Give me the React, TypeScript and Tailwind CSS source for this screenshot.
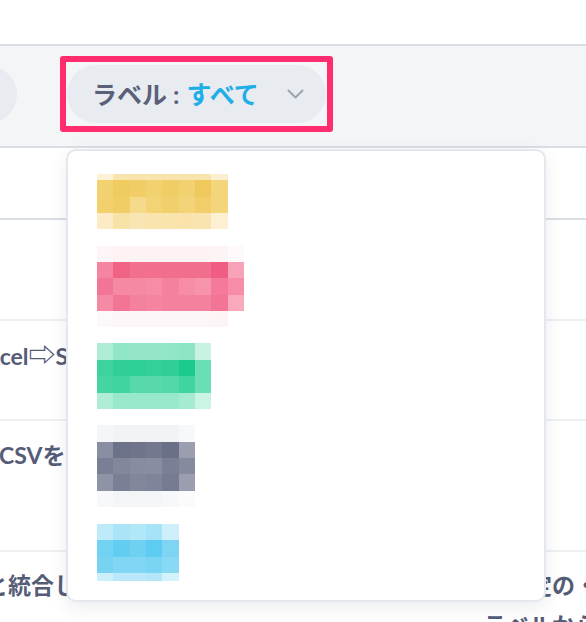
import React from 'react';

// Pixelated label swatches shown inside the dropdown (blurred label names)
interface Swatch {
  rows: number[];
  cells: string[][];
}

const CELL_W = 16.35;

const SWATCHES: Swatch[] = [
  {
    rows: [6, 17, 16, 16],
    cells: [
      ['#fdf1d6', '#f9e4ad', '#f9e4ad', '#f9e4ad', '#f9e4ad', '#f9e4ad', '#f9e4ad', '#fbefcf'],
      ['#f2d171', '#f0cb60', '#f1cd66', '#f2d170', '#f1cd66', '#f2d170', '#efc95b', '#f3d57c'],
      ['#f2d06d', '#f1cd66', '#f5da8b', '#f3d375', '#f1cf6b', '#f3d478', '#f1ce69', '#f3d57c'],
      ['#fcebc4', '#f9e2a7', '#f8e5b4', '#f9e4ae', '#f9e4ae', '#f9e3ab', '#f9e4b0', '#fcefd2'],
    ],
  },
  {
    rows: [16, 16, 17, 16, 16],
    cells: [
      ['#fdf5f7', '#fdf3f5', '#fdf3f5', '#fdf3f5', '#fdf3f5', '#fdf3f5', '#fdf3f5', '#fdf4f6', '#fefafb'],
      ['#f4849f', '#f06385', '#f26f8e', '#f26f8e', '#f26e8d', '#f26e8d', '#f26e8d', '#ef5e82', '#f7a2b8'],
      ['#f27595', '#f588a2', '#f588a2', '#f68ca6', '#f4819d', '#f68ca6', '#f794ab', '#f4799a', '#f68ca6'],
      ['#f48aa3', '#f27595', '#f4819d', '#f4849f', '#f4819d', '#f4819d', '#f4819d', '#f27595', '#f8a9bc'],
      ['#fdf8f9', '#fdf6f8', '#fdf6f8', '#fdf6f8', '#fdf6f8', '#fdf6f8', '#fdf6f8', '#fdf4f6', '#ffffff'],
    ],
  },
  {
    rows: [17, 16, 17, 16],
    cells: [
      ['#b0edd6', '#90e6c6', '#93e7c8', '#93e7c8', '#90e6c6', '#8de5c4', '#c8f3e3'],
      ['#3ed39e', '#30cf97', '#30cf97', '#34d099', '#30cf97', '#1ccb8c', '#6adfb6'],
      ['#45d5a2', '#40d49f', '#57d9ac', '#57d9ac', '#52d8a9', '#40d49f', '#6adfb6'],
      ['#b0edd6', '#98e8ca', '#98e8ca', '#98e8ca', '#98e8ca', '#a4ebd1', '#cbf4e5'],
    ],
  },
  {
    rows: [17, 16, 16, 17, 16],
    cells: [
      ['#f5f6f8', '#f1f3f5', '#f1f3f5', '#f1f3f5', '#f1f3f5', '#f7f8f9'],
      ['#8a8ea2', '#6d728b', '#6f748c', '#74788f', '#6b7089', '#9a9eae'],
      ['#7a7f95', '#83879b', '#888ca0', '#898da1', '#7a7f95', '#858a9d'],
      ['#8f93a6', '#7a7f95', '#83879b', '#80849a', '#767b92', '#9a9eae'],
      ['#f7f8f9', '#f4f5f7', '#f4f5f7', '#f4f5f7', '#f7f8f9', '#fbfbfc'],
    ],
  },
  {
    rows: [16, 17, 16, 8],
    cells: [
      ['#bfeafa', '#a9e4f8', '#b2e7f8', '#a6e3f8', '#cdeffa'],
      ['#72d2f3', '#63cdf1', '#6fd1f2', '#5ecbf1', '#7dd5f3'],
      ['#78d3f3', '#80d6f4', '#80d6f4', '#7ad4f3', '#88d9f4'],
      ['#cbeffb', '#b8e8f9', '#b8e8f9', '#b3e7f8', '#d4f2fb'],
    ],
  },
];

function Mosaic({ swatch }: { swatch: Swatch }) {
  const cols = swatch.cells[0].length;
  const width = cols * CELL_W;
  const height = swatch.rows.reduce((a, b) => a + b, 0);
  let y = 0;
  return (
    <svg width={width} height={height} viewBox={`0 0 ${width} ${height}`} shapeRendering="crispEdges" className="block">
      {swatch.rows.map((h, r) => {
        const top = y;
        y += h;
        return swatch.cells[r].map((c, i) => (
          <rect key={`${r}-${i}`} x={i * CELL_W} y={top} width={CELL_W + 0.5} height={h} fill={c} />
        ));
      })}
    </svg>
  );
}

function Chevron() {
  return (
    <svg width="17" height="10" viewBox="0 0 17 10" fill="none" className="ml-auto mr-[22px]">
      <path d="M1.5 1.5L8.5 8.5L15.5 1.5" stroke="#9fa3b5" strokeWidth="2" strokeLinecap="round" strokeLinejoin="round" />
    </svg>
  );
}

export default function App() {
  return (
    <div className="relative h-[622px] w-[586px] overflow-hidden bg-white font-['Lato','Noto_Sans_CJK_JP',sans-serif] text-[#555c77]">
      {/* Top spacer */}
      <div className="h-[44px]" />

      {/* Filter bar */}
      <div className="flex h-[104px] items-start gap-[43px] border-y-2 border-[#d9dde4] bg-[#f4f5f7] pt-[10px]">
        <div className="-ml-[43px] mt-[10px] h-[57px] w-[60px] shrink-0 rounded-full bg-[#e8ebf0]" />
        <div className="shrink-0 rounded-[3px] border-[6px] border-[#ff2d6d] px-[1px] py-[3px]">
          <div className="flex h-[58px] w-[259px] items-center rounded-full bg-[#e8ebf0] pl-[25px] text-[25px] font-bold leading-none">
            <span className="text-[#5a6078]">ラベル : </span>
            <span className="ml-[7px] text-[#1eaee8]">すべて</span>
            <Chevron />
          </div>
        </div>
      </div>

      {/* Table */}
      <div className="h-[72px] border-b-2 border-[#d9dde4]" />
      <div className="h-[101px] border-b-2 border-[#eef0f3]" />
      <div className="flex h-[100px] border-b-2 border-[#eef0f3] pt-[16px] text-[23px] font-bold leading-[36px]">
        <div className="w-[483px] shrink-0 whitespace-nowrap">
          <span className="-ml-[25px] inline-block">
            Excel<span className="text-[27px]">⇨</span>Spreadsheet変換
          </span>
        </div>
      </div>
      <div className="flex h-[131px] border-b-2 border-[#eef0f3] pt-[16px] text-[23px] font-bold leading-[36px]">
        <div className="w-[483px] shrink-0 whitespace-nowrap">
          <span className="-ml-[1px] inline-block">CSVをインポート</span>
        </div>
      </div>
      <div className="flex pt-[15px] text-[23px] font-bold leading-[36px]">
        <div className="w-[483px] shrink-0 whitespace-nowrap">
          <span className="-ml-[15px] inline-block">と統合して自動化</span>
        </div>
        <div className="whitespace-nowrap">
          <div>未設定の・</div>
          <div className="mt-[4px]">ラベルから選択</div>
        </div>
      </div>

      {/* Label dropdown */}
      <div className="absolute left-[66px] top-[149px] flex h-[453px] w-[480px] flex-col rounded-[10px] border-2 border-[#e4e7ed] bg-white pl-[29px] pt-[23px] shadow-[0_6px_18px_rgba(40,50,80,0.09)]">
        <Mosaic swatch={SWATCHES[0]} />
        <div className="mt-[17px]">
          <Mosaic swatch={SWATCHES[1]} />
        </div>
        <div className="mt-[16px]">
          <Mosaic swatch={SWATCHES[2]} />
        </div>
        <div className="mt-[16px]">
          <Mosaic swatch={SWATCHES[3]} />
        </div>
        <div className="mt-[17px]">
          <Mosaic swatch={SWATCHES[4]} />
        </div>
      </div>
    </div>
  );
}
